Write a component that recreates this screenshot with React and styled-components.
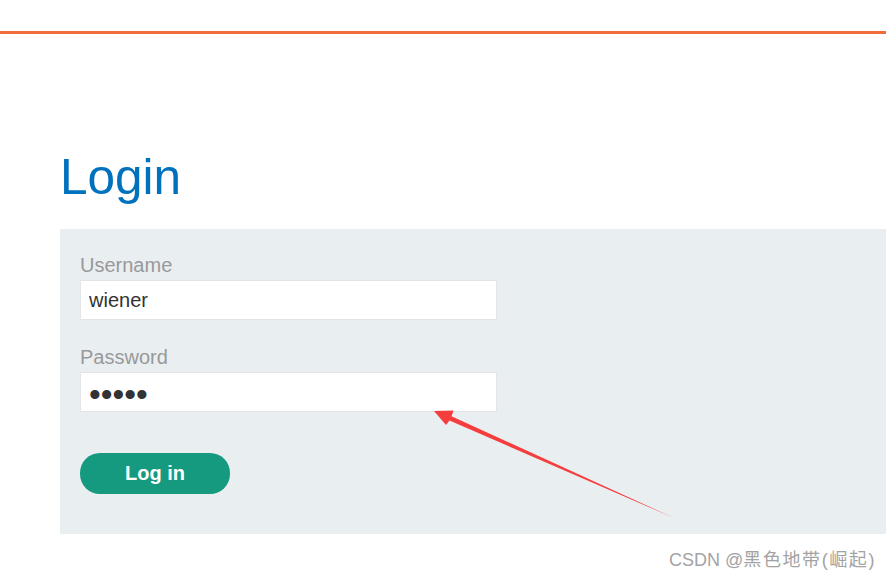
import React from "react";
import styled, { createGlobalStyle } from "styled-components";

const GlobalStyle = createGlobalStyle`
  html, body {
    margin: 0;
    padding: 0;
    background: #ffffff;
    font-family: "Liberation Sans", Arial, sans-serif;
  }
  body {
    overflow: hidden;
  }
`;

const Page = styled.div`
  position: relative;
  width: 886px;
  height: 579px;
  overflow: hidden;
`;

const Header = styled.header`
  height: 31px;
  border-bottom: 3px solid #f26b3a;
`;

const Container = styled.main`
  padding-left: 60px;
`;

const Title = styled.h1`
  margin: 113px 0 22px;
  font-size: 49.5px;
  line-height: 60px;
  font-weight: 400;
  color: #0071bc;
`;

const Panel = styled.form`
  display: flex;
  flex-direction: column;
  align-items: flex-start;
  padding: 24px 20px 40px;
  background: #e9eef1;
`;

const Label = styled.label`
  font-size: 20px;
  line-height: 24px;
  color: #999999;
  margin-top: ${(p) => (p.$first ? "0" : "25px")};
  margin-bottom: 3px;
`;

const Input = styled.input`
  box-sizing: border-box;
  width: 417px;
  height: 40px;
  margin: 0;
  padding: 0 8px;
  border: 1px solid #e2e4e6;
  background: #ffffff;
  font-family: "Liberation Sans", Arial, sans-serif;
  font-size: 20px;
  color: #333333;
  outline: none;

  &[type="password"] {
    font-size: 33.5px;
    padding-top: 5px;
  }
`;

const Button = styled.button`
  box-sizing: border-box;
  margin-top: 41px;
  width: 150px;
  height: 41px;
  border: none;
  border-radius: 20px;
  background: #169a7f;
  color: #ffffff;
  font-family: "Liberation Sans", Arial, sans-serif;
  font-size: 20px;
  font-weight: 700;
  cursor: pointer;
`;

const Arrow = styled.svg`
  position: absolute;
  left: 0;
  top: 0;
  pointer-events: none;
`;

const Watermark = styled.div`
  position: absolute;
  left: 669px;
  top: 548px;
  font-family: "Liberation Sans", "Noto Sans CJK SC", sans-serif;
  font-size: 18px;
  line-height: 24px;
  color: #a3a3a3;
  white-space: nowrap;
`;

const Handle = styled.span`
  letter-spacing: 1.6px;
`;

export default function App() {
  return (
    <Page>
      <GlobalStyle />
      <Header />
      <Container>
        <Title>Login</Title>
        <Panel onSubmit={(e) => e.preventDefault()}>
          <Label $first htmlFor="username">Username</Label>
          <Input id="username" type="text" defaultValue="wiener" />
          <Label htmlFor="password">Password</Label>
          <Input id="password" type="password" defaultValue="peter" />
          <Button type="submit">Log in</Button>
        </Panel>
      </Container>
      <Arrow width="886" height="579" viewBox="0 0 886 579">
        <polygon
          points="434,411 453.5,410.5 451.5,416.2 674,518 449.5,420.5 446,425"
          fill="#f53d3d"
        />
      </Arrow>
      <Watermark>
        CSDN @<Handle>黑色地带(崛起)</Handle>
      </Watermark>
    </Page>
  );
}
